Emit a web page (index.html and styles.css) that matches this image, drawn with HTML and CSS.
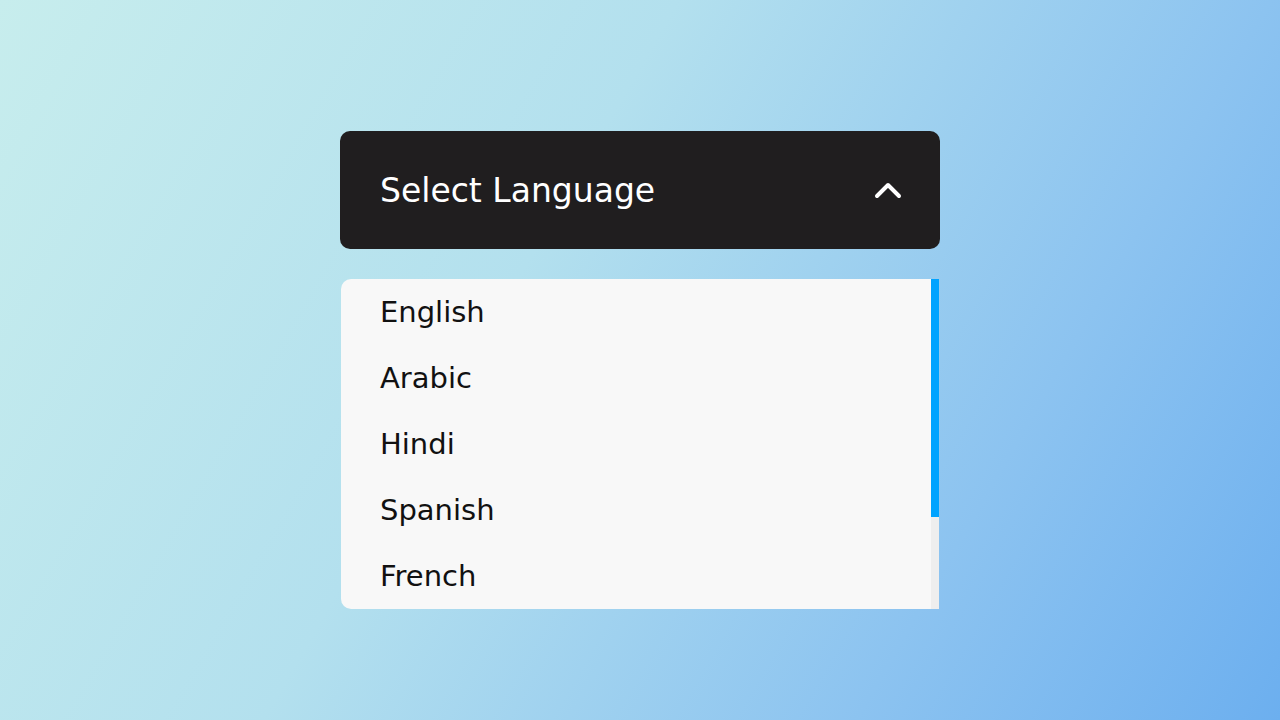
FILE: index.html
```html
<!DOCTYPE html>
<html lang="en">
<head>
  <meta charset="UTF-8">
  <meta name="viewport" content="width=device-width, initial-scale=1.0">
  <title>Select Language</title>
  <link rel="stylesheet" href="styles.css">
</head>
<body>
  <div class="dropdown">
    <div class="select-btn">
      <span>Select Language</span>
      <svg class="chevron" width="28" height="18" viewBox="0 0 28 18">
        <polyline points="3,15 14,4 25,15" fill="none" stroke="#fff" stroke-width="4" stroke-linecap="round" stroke-linejoin="round"/>
      </svg>
    </div>

    <div class="options">
      <ul class="list">
        <li>English</li>
        <li>Arabic</li>
        <li>Hindi</li>
        <li>Spanish</li>
        <li>French</li>
      </ul>
      <div class="scroll-track">
        <div class="scroll-thumb"></div>
      </div>
    </div>
  </div>
</body>
</html>
```

FILE: styles.css
```css
* {
  box-sizing: border-box;
  margin: 0;
  padding: 0;
  font-family: 'DejaVu Sans', 'Open Sans', sans-serif;
}

body {
  min-height: 100vh;
  background: linear-gradient(120deg, #c7eded 0%, #b3e0ee 40%, #8cc3f0 75%, #6cafef 100%);
}

.dropdown {
  width: 600px;
  margin: 0 auto;
  padding-top: 131px;
}

.select-btn {
  height: 118px;
  background: #201e1f;
  border-radius: 10px;
  padding: 0 38px 0 40px;
  display: flex;
  align-items: center;
  justify-content: space-between;
  color: #fff;
  font-size: 33px;
}

.options {
  display: flex;
  margin: 30px 1px 0 1px;
  height: 330px;
  background: #f8f8f8;
  border-radius: 10px 0 0 10px;
}

.list {
  flex: 1;
  list-style: none;
}

.list li {
  height: 66px;
  display: flex;
  align-items: center;
  padding-left: 39px;
  font-size: 29px;
  color: #111;
}

.scroll-track {
  width: 8px;
  background: #eeeeee;
}

.scroll-thumb {
  height: 238px;
  background: #00a3ff;
}
```
